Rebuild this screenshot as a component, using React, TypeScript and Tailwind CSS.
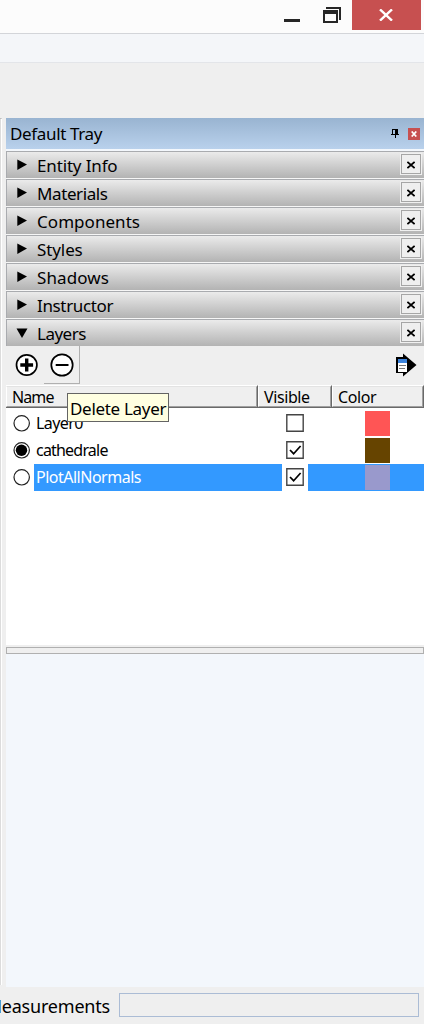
import React from 'react';

const sections = [
  { name: 'Entity Info', track: 'tracking-[-0.15px]' },
  { name: 'Materials', track: 'tracking-[-0.4px]' },
  { name: 'Components', track: 'tracking-[0.05px]' },
  { name: 'Styles', track: 'tracking-[-0.1px]' },
  { name: 'Shadows', track: 'tracking-[0.1px]' },
  { name: 'Instructor', track: 'tracking-[-0.35px]' },
  { name: 'Layers', track: 'tracking-[-0.5px]', open: true },
];

const layers = [
  { name: 'Layer0', track: 'tracking-[-0.6px]', active: false, visible: false, selected: false, color: 'bg-[#ff5555]' },
  { name: 'cathedrale', track: 'tracking-[-0.8px]', active: true, visible: true, selected: false, color: 'bg-[#664400]' },
  { name: 'PlotAllNormals', track: 'tracking-[-0.5px]', active: false, visible: true, selected: true, color: 'bg-[#9999cc]' },
];

function TitleBar() {
  return (
    <div className="flex h-[34px] shrink-0 items-start justify-end border-b border-[#d3d5d9] bg-[#fcfcfc]">
      <svg className="h-[30px] w-[88px]" viewBox="264 0 88 30" shapeRendering="crispEdges">
        <path d="M284 19h16v3h-16z" fill="#262626" />
        <path d="M326 7h15v13h-2V9h-13z" fill="#262626" />
        <path d="M323 10h15v13h-15zM325 14v7h11v-7z" fill="#262626" fillRule="evenodd" />
      </svg>
      <div className="flex h-[30px] w-[69px] items-center bg-[#c75050] pl-[27px]">
        <svg className="h-3 w-[14px]" viewBox="0 0 14 12">
          <path d="M1 .4 13 11.6M13 .4 1 11.6" stroke="#fff" strokeWidth="2.4" />
        </svg>
      </div>
      <div className="w-[3px]" />
    </div>
  );
}

function TrayHeader() {
  return (
    <div className="flex h-[31px] items-center bg-linear-to-b from-[#99b4d1] to-[#b9d1ec] pl-1">
      <span className="flex-1 text-[17px] leading-[31px] tracking-[-0.35px] whitespace-nowrap">Default Tray</span>
      <svg className="mr-[9px] h-[9px] w-2" viewBox="0 0 8 9" shapeRendering="crispEdges">
        <path d="M1 0h6v5h1v1H5v3H4V6H0V5h1zM2 1v4h2V1z" fillRule="evenodd" />
      </svg>
      <div className="mr-1 flex h-3 w-3 items-center justify-center bg-[#c75050]">
        <svg className="h-[6px] w-[6px]" viewBox="0 0 6 6">
          <path d="M.7 .5 5.3 5.5M5.3 .5 .7 5.5" stroke="#fff" strokeWidth="1.7" />
        </svg>
      </div>
    </div>
  );
}

function Section({ name, track, open }: { name: string; track: string; open?: boolean }) {
  return (
    <div className="flex h-7 border-b border-[#f6f6f6]">
      <div className="flex h-[27px] flex-1 items-start border-t border-l border-[#a9abaf] bg-linear-to-b from-[#ebebeb] to-[#b3b3b3]">
        <svg className="mt-[7px] ml-[9px] h-3 w-3" viewBox="0 0 12 12">
          {open ? <path d="M.5 1.5h11L6 11z" /> : <path d="M1.3 .4 11 5.5 1.3 10.9z" />}
        </svg>
        <span className={'ml-[9px] flex-1 text-[17px] leading-[27px] whitespace-nowrap ' + track}>{name}</span>
        <div className="mt-[1px] mr-[2px] flex h-[22px] w-[22px] items-center justify-center border border-[#f0f0f0]">
          <div className="flex h-5 w-5 shrink-0 items-center justify-center border border-[#a6a6a6] bg-[#efefef]">
            <svg className="mt-[2px] h-2 w-2" viewBox="0 0 8 8">
              <path d="M.4 .9 7.6 7.1M7.6 .9 .4 7.1" stroke="#000" strokeWidth="1.8" />
            </svg>
          </div>
        </div>
      </div>
    </div>
  );
}

function Toolbar() {
  return (
    <div className="flex h-[39px] bg-[#efefef]">
      <div className="flex h-[38px] w-[38px] items-center pl-[9px]">
        <svg className="h-6 w-6" viewBox="0 0 24 24">
          <circle cx="11.7" cy="12" r="10.2" fill="#fff" stroke="#000" strokeWidth="1.7" />
          <path d="M5.3 12h12.8M11.7 5.6v12.8" stroke="#000" strokeWidth="3.4" />
        </svg>
      </div>
      <div className="flex h-[38px] w-9 items-center justify-center border-r border-b border-[#b0b0b0]">
        <svg className="h-6 w-6" viewBox="0 0 24 24">
          <circle cx="12" cy="12" r="10.7" fill="#fff" stroke="#000" strokeWidth="1.7" />
          <path d="M5.7 12h12.8" stroke="#000" strokeWidth="2" />
        </svg>
      </div>
      <svg className="mt-[7px] mr-[7px] ml-auto h-6 w-[21px]" viewBox="0 0 21 24">
        <path d="M0 4h7V.5L20.5 12 7 23.5V20H0z" />
        <path d="M2 6h9v4H2z" fill="#3b83dc" />
        <path d="M2 10h9v9H2z" fill="#fff" />
        <path d="M3 12.5h7M3 15.5h6" stroke="#777" strokeWidth="1.2" />
      </svg>
    </div>
  );
}

function ColumnHead({ label, size, track }: { label: string; size: string; track: string }) {
  return (
    <div className={'h-[23px] border-t border-r border-b border-t-white border-r-[#696969] border-b-[#696969] ' + size}>
      <div
        className={
          'h-[21px] border-t border-r border-b border-l border-t-[#e3e3e3] border-r-[#a0a0a0] border-b-[#a0a0a0] border-l-white pl-[5px] text-[16px] leading-[21px] ' +
          track
        }
      >
        {label}
      </div>
    </div>
  );
}

function LayerRow({ name, track, active, visible, selected, color }: (typeof layers)[number]) {
  return (
    <div className="flex h-[27px]">
      <div className="flex w-7 items-start pt-1 pl-[7px]">
        <svg className="h-[18px] w-[18px]" viewBox="0 0 18 18">
          <circle cx="8.7" cy="9.3" r="7.7" fill="#fff" stroke="#222" strokeWidth="1.2" />
          {active && <circle cx="8.5" cy="9.3" r="5.7" />}
        </svg>
      </div>
      <div className={'flex flex-1 items-center ' + (selected ? 'bg-[#3399ff] text-white' : '')}>
        <span className={'w-[248px] pl-[2px] text-[16px] leading-[27px] whitespace-nowrap ' + track}>{name}</span>
        <div className="flex h-[27px] w-[26px] items-start justify-center bg-white pt-1">
          <svg className="h-[18px] w-[18px]" viewBox="0 0 18 18">
            <path d="M.8 .8h16.4v16.4H.8z" fill="#fff" stroke="#444" strokeWidth="1.4" />
            {visible && <path d="m4 9 3.6 3.7 7-7.7" fill="none" stroke="#000" strokeWidth="1.7" />}
          </svg>
        </div>
        <div className={'ml-[57px] h-[25px] w-[25px] ' + color} />
      </div>
    </div>
  );
}

export default function App() {
  return (
    <div className="relative flex h-[1024px] w-[424px] flex-col overflow-hidden bg-[#efefef] font-['Noto_Sans',sans-serif] text-black">
      <TitleBar />
      <div className="h-[29px] shrink-0 border-b border-[#e3e5e9] bg-[#f4f6f9]" />
      <div className="h-[55px] shrink-0" />
      <div className="flex h-[869px] shrink-0">
        <div className="mb-[2px] w-[2px] border-t border-r border-l border-t-[#a0a0a0] border-r-white border-l-[#dcdcdc]" />
        <div className="w-1" />
        <div className="flex flex-1 flex-col bg-[#f3f7fc]">
          <TrayHeader />
          <div className="h-[2px]" />
          {sections.map((s) => (
            <Section key={s.name} {...s} />
          ))}
          <div className="-mt-px">
            <Toolbar />
          </div>
          <div className="flex h-[23px] bg-[#efefef]">
            <ColumnHead label="Name" size="w-[252px]" track="tracking-[-0.9px]" />
            <ColumnHead label="Visible" size="w-[74px]" track="tracking-[-0.4px]" />
            <ColumnHead label="Color" size="w-[92px]" track="tracking-[-0.4px]" />
          </div>
          <div className="h-[237px] bg-white pt-[2px]">
            {layers.map((l) => (
              <LayerRow key={l.name} {...l} />
            ))}
          </div>
          <div className="h-[2px] bg-[#efefef]" />
          <div className="h-[7px] border border-[#b0b0b0] bg-[#efefef]" />
        </div>
      </div>
      <div className="flex h-[37px] shrink-0 items-start">
        <div className="flex w-[110px] justify-end">
          <span className="text-[18px] leading-[38px] tracking-[-0.2px] whitespace-nowrap">Measurements</span>
        </div>
        <div className="mt-[6px] ml-[9px] h-6 w-[300px] border border-[#abbcd5]" />
      </div>
      <div className="absolute top-[393px] left-[67px] h-[29px] w-[102px] border border-[#646464] bg-[#ffffe1] pl-[2px] text-[17px] leading-[29px] tracking-[-0.3px] whitespace-nowrap">
        Delete Layer
      </div>
    </div>
  );
}
